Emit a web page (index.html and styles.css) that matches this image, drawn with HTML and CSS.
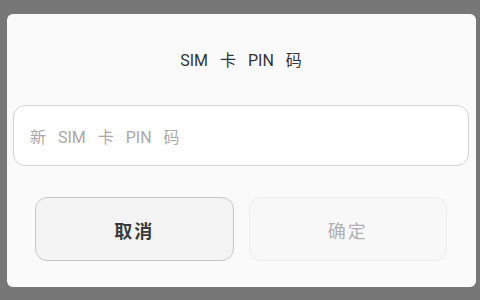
FILE: index.html
```html
<!DOCTYPE html>
<html lang="zh-CN">
<head>
  <meta charset="UTF-8" />
  <title>SIM 卡 PIN 码</title>
  <meta name="viewport" content="width=device-width, initial-scale=1" />
  <link rel="stylesheet" href="styles.css">
</head>
<body>

  <div class="dialog">
    <div class="dialog-title">SIM 卡 PIN 码</div>
    <input class="pin-input" type="password" placeholder="新 SIM 卡 PIN 码" />
    <div class="button-row">
      <button class="dlg-button cancel">取消</button>
      <button class="dlg-button confirm" disabled>确定</button>
    </div>
  </div>

</body>
</html>
```

FILE: styles.css
```css
body {
  margin: 0;
  background: #777;
  font-family: 'Roboto', 'Noto Sans CJK SC', sans-serif;
  height: 300px;
  overflow: hidden;
}

.dialog {
  margin: 14px 4px 0 7px;
  width: 469px;
  height: 273px;
  box-sizing: border-box;
  padding: 0 7px 0 6px;
  background: #fafafa;
  border-radius: 6px;
  display: flex;
  flex-direction: column;
}

.dialog-title {
  height: 91px;
  display: flex;
  align-items: center;
  justify-content: center;
  padding-bottom: 2px;
  box-sizing: border-box;
  font-size: 16px;
  color: #333;
  word-spacing: 8px;
}

.pin-input {
  height: 61px;
  box-sizing: border-box;
  border: 1px solid #d4d4d4;
  border-radius: 12px;
  background: #fff;
  padding: 4px 16px 0;
  font-family: inherit;
  font-size: 16px;
  outline: none;
}

.pin-input::placeholder {
  color: #a8a8a8;
  word-spacing: 8px;
}

.button-row {
  display: flex;
  gap: 15px;
  margin-top: 31px;
  padding: 0 22px;
}

.dlg-button {
  flex: 1;
  height: 64px;
  padding-top: 3px;
  border-radius: 12px;
  font-family: inherit;
  font-size: 18px;
  letter-spacing: 2px;
}

.cancel {
  background: #f3f3f3;
  border: 1px solid #c8c8c8;
  color: #3a3a3a;
  font-weight: bold;
}

.confirm {
  background: #f8f8f8;
  border: 1px solid #ececec;
  color: #b0b0b0;
}
```
